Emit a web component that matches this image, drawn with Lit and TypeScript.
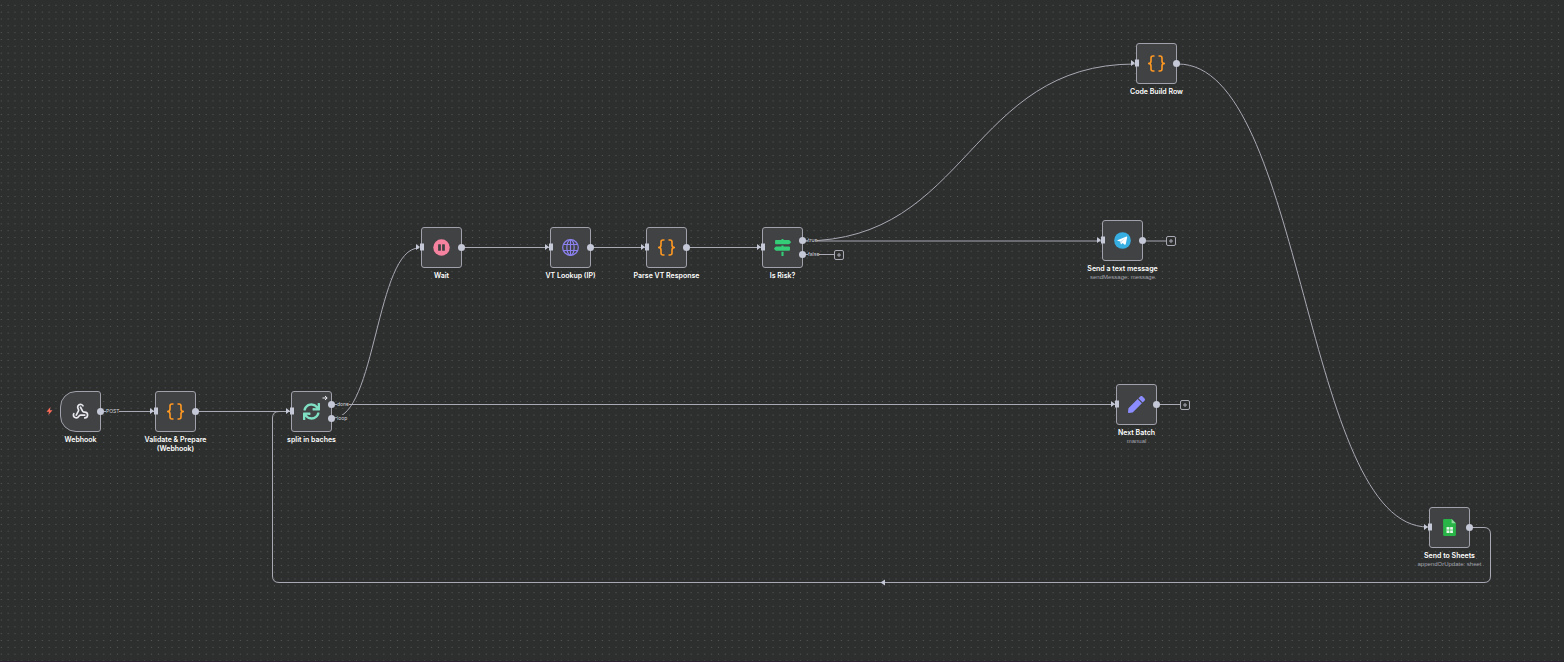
import { LitElement, html, svg, css, nothing } from "lit";
import { customElement, property } from "lit/decorators.js";
import { classMap } from "lit/directives/class-map.js";
import { styleMap } from "lit/directives/style-map.js";

interface Output {
  y: number;
  label?: string;
}

interface FlowNode {
  title: string;
  subtitle?: string;
  icon: string;
  x: number;
  y: number;
  outputs: Output[];
  trigger?: boolean;
  executeOnce?: boolean;
}

const SIZE = 41;

const nodes: FlowNode[] = [
  { title: "Webhook", icon: "webhook", x: 60, y: 391, outputs: [{ y: 20, label: "POST" }], trigger: true },
  { title: "Validate & Prepare\n(Webhook)", icon: "code", x: 155, y: 391, outputs: [{ y: 20 }] },
  {
    title: "split in baches", icon: "loop", x: 291, y: 391, executeOnce: true,
    outputs: [{ y: 13, label: "done" }, { y: 27, label: "loop" }],
  },
  { title: "Wait", icon: "pause", x: 421, y: 227, outputs: [{ y: 20 }] },
  { title: "VT Lookup (IP)", icon: "globe", x: 550, y: 227, outputs: [{ y: 20 }] },
  { title: "Parse VT Response", icon: "code", x: 646, y: 227, outputs: [{ y: 20 }] },
  {
    title: "Is Risk?", icon: "signs", x: 762, y: 227,
    outputs: [{ y: 13, label: "true" }, { y: 27, label: "false" }],
  },
  { title: "Code Build Row", icon: "code", x: 1136, y: 43, outputs: [{ y: 20 }] },
  { title: "Send a text message", subtitle: "sendMessage: message", icon: "telegram", x: 1102, y: 220, outputs: [{ y: 20 }] },
  { title: "Next Batch", subtitle: "manual", icon: "pen", x: 1116, y: 384, outputs: [{ y: 20 }] },
  { title: "Send to Sheets", subtitle: "appendOrUpdate: sheet", icon: "sheets", x: 1429, y: 507, outputs: [{ y: 20 }] },
];

const edges = [
  "M101 411.5H154",
  "M196 411.5H290",
  "M333 404.5H1115",
  "M333 418C376 418 376 248 419 248",
  "M462 247.5H549",
  "M591 247.5H645",
  "M687 247.5H761",
  "M803 241C969 241 969 64 1135 64",
  "M803 241H1101",
  "M803 254.5H834",
  "M1144 241H1167",
  "M1158 404.5H1180",
  "M1178 64C1304 64 1304 527 1428 527",
  "M1471 527.5H1484Q1490.5 527.5 1490.5 534V576Q1490.5 582.5 1484 582.5H279Q272.5 582.5 272.5 576V418Q272.5 411.5 279 411.5H290",
];

const addPoints = [
  { x: 834, y: 250, from: "Is Risk? false" },
  { x: 1166, y: 236, from: "Send a text message" },
  { x: 1180, y: 400, from: "Next Batch" },
];

const icons: Record<string, unknown> = {
  webhook: svg`<svg viewBox="0 0 24 24" fill="none" stroke="#e8e8ee" stroke-width="2.4" stroke-linecap="round" stroke-linejoin="round">
    <path d="M18 16.98h-5.99c-1.1 0-1.95.94-2.48 1.9A4 4 0 0 1 2 17c.01-.7.2-1.4.57-2"/>
    <path d="m6 17 3.13-5.78c.53-.97.1-2.18-.5-3.1a4 4 0 1 1 6.89-4.06"/>
    <path d="m12 6 3.13 5.73C15.66 12.7 16.9 13 18 13a4 4 0 0 1 0 8"/></svg>`,
  code: svg`<svg viewBox="0 0 34 34" fill="none" stroke="#ff9922" stroke-width="3.2" stroke-linejoin="round">
    <path d="M13 2H10Q6 2 6 6V12Q6 17 1 17Q6 17 6 22V28Q6 32 10 32H13"/>
    <path d="M21 2H24Q28 2 28 6V12Q28 17 33 17Q28 17 28 22V28Q28 32 24 32H21"/></svg>`,
  loop: svg`<svg viewBox="0 0 512 512" fill="#7fe0c3"><path d="M440.65 12.57l4 82.77A247.16 247.16 0 0 0 255.83 8C134.73 8 33.91 94.92 12.29 209.82A12 12 0 0 0 24.09 224h49.05a12 12 0 0 0 11.67-9.26 175.91 175.91 0 0 1 317-56.94l-101.46-4.86a12 12 0 0 0-12.57 12v47.41a12 12 0 0 0 12 12H500a12 12 0 0 0 12-12V12a12 12 0 0 0-12-12h-47.37a12 12 0 0 0-11.98 12.57zM255.83 432a175.61 175.61 0 0 1-146-77.8l101.8 4.87a12 12 0 0 0 12.57-12v-47.4a12 12 0 0 0-12-12H12a12 12 0 0 0-12 12V500a12 12 0 0 0 12 12h47.35a12 12 0 0 0 12-12.6l-4.15-82.57A247.17 247.17 0 0 0 255.83 504c121.11 0 221.93-86.92 243.55-201.82a12 12 0 0 0-11.8-14.18h-49.05a12 12 0 0 0-11.67 9.26A175.86 175.86 0 0 1 255.83 432z"/></svg>`,
  pause: svg`<svg viewBox="0 0 512 512"><circle cx="256" cy="256" r="248" fill="#f5829f"/>
    <rect x="154" y="158" width="84" height="196" rx="16" fill="#414244"/>
    <rect x="274" y="158" width="84" height="196" rx="16" fill="#414244"/></svg>`,
  globe: svg`<svg viewBox="0 0 40 40" fill="none" stroke="#8b82f0" stroke-width="2.8">
    <circle cx="20" cy="20" r="18.4"/><ellipse cx="20" cy="20" rx="8.6" ry="18.4"/>
    <path d="M20 1.4V38.6M3.2 13H36.8M3.2 27H36.8"/></svg>`,
  signs: svg`<svg viewBox="0 0 512 512" fill="#35cc78"><path d="M507.31 84.69L464 41.37c-6-6-14.14-9.37-22.63-9.37H288V16c0-8.84-7.16-16-16-16h-32c-8.84 0-16 7.16-16 16v16H56c-13.25 0-24 10.75-24 24v80c0 13.25 10.75 24 24 24h385.37c8.49 0 16.62-3.37 22.63-9.37l43.31-43.31c6.25-6.26 6.25-16.38 0-22.63zM224 496c0 8.84 7.16 16 16 16h32c8.84 0 16-7.16 16-16V384h-64v112zm232-272H288v-32h-64v32H70.63c-8.49 0-16.62 3.37-22.63 9.37L4.69 276.69c-6.25 6.25-6.25 16.38 0 22.63L48 342.63c6 6 14.14 9.37 22.63 9.37H456c13.25 0 24-10.75 24-24v-80c0-13.25-10.75-24-24-24z"/></svg>`,
  telegram: svg`<svg viewBox="0 0 40 40"><circle cx="20" cy="20" r="19.6" fill="#37aee2"/>
    <path d="M8 19.6L29.6 10.8Q31.2 10.4 31 12.4L27.6 29Q27 30.8 25.2 29.8L20 26L17.4 28.6Q16.4 29.4 16 28L14.6 22.4L8.4 20.6Q7 20.2 8 19.6Z" fill="#fff"/>
    <path d="M14.8 22.4L26.6 14.6L17.4 23.6L16.6 28.2Z" fill="#b9d9ea"/></svg>`,
  pen: svg`<svg viewBox="0 0 512 512" fill="#8a8cff"><path d="M290.74 93.24l128.02 128.02-277.99 277.99-114.14 12.6C11.35 513.54-1.56 500.62.14 485.34l12.7-114.22 277.9-277.88zm207.2-19.06l-60.11-60.11c-18.75-18.75-49.16-18.75-67.91 0l-56.55 56.55 128.02 128.02 56.55-56.55c18.75-18.76 18.75-49.16 0-67.91z"/></svg>`,
  sheets: svg`<svg viewBox="0 0 40 40"><path d="M8 0H25L35 10V37Q35 40 32 40H8Q5 40 5 37V3Q5 0 8 0Z" fill="#28b446"/>
    <path d="M25 0L35 10H25Z" fill="#8edba0"/>
    <path d="M13 19H28V33H13Z" fill="#e9f8ec"/><path d="M13 26H28M20.5 19V33" stroke="#28b446" stroke-width="1.6"/></svg>`,
};

@customElement("flow-node")
export class FlowNodeElement extends LitElement {
  @property({ attribute: false }) node!: FlowNode;

  static styles = css`
    :host { display: block; }
    .box {
      position: relative;
      box-sizing: border-box;
      display: flex;
      align-items: center;
      justify-content: center;
      height: 41px;
      border: 1px solid #a0a1ab;
      border-radius: 3px;
      background: #414244;
    }
    .trigger { border-radius: 16px 3px 3px 16px; }
    .icon { display: flex; width: 17px; height: 17px; }
    .icon svg { width: 100%; height: 100%; }
    .bolt { position: absolute; left: -15px; top: 15px; width: 7px; height: 8px; }
    .once { position: absolute; right: 3px; top: 3px; width: 6px; height: 6px; }
    .input { position: absolute; left: -6px; top: 15px; width: 8px; height: 8px; }
    .output {
      position: absolute;
      right: -4px;
      width: 7px;
      height: 7px;
      margin-top: -4px;
      border-radius: 50%;
      background: #c5c8d6;
    }
    .tag {
      position: absolute;
      left: 100%;
      margin: -4px 0 0 6px;
      background: #2d2f2e;
      color: #d4d5dd;
      font-size: 5px;
      line-height: 7px;
      white-space: nowrap;
    }
    .caption {
      display: flex;
      flex-direction: column;
      align-items: center;
      padding-top: 3px;
      text-align: center;
      white-space: pre;
    }
    .title { color: #fff; font-size: 7px; font-weight: 600; line-height: 9px; }
    .subtitle {
      color: #a2a3ad;
      font-family: "Liberation Sans", sans-serif;
      font-size: 6px;
      line-height: 9px;
    }
  `;

  render() {
    const n = this.node;
    return html`
      <div class=${classMap({ box: true, trigger: !!n.trigger })}>
        <span class="icon">${icons[n.icon]}</span>
        ${n.trigger
          ? html`<svg class="bolt" viewBox="0 0 14 16"><path d="M9 0L1 9.4H6L4.6 16L13 6.4H8Z" fill="#ff6d5a"/></svg>`
          : html`<svg class="input" viewBox="0 0 8 8"><path d="M0 1L4 4L0 7ZM4 0.5H8V7.5H4Z" fill="#c5c8d6"/></svg>`}
        ${n.executeOnce
          ? html`<svg class="once" viewBox="0 0 12 12"><path d="M1 6H10M6 2L10.4 6L6 10" fill="none" stroke="#f0f0f4" stroke-width="2"/></svg>`
          : nothing}
        ${n.outputs.map((o) => html`
          <span class="output" style=${styleMap({ top: `${o.y}px` })}></span>
          ${o.label ? html`<span class="tag" style=${styleMap({ top: `${o.y}px` })}>${o.label}</span>` : nothing}
        `)}
      </div>
      <div class="caption">
        <span class="title">${n.title}</span>
        ${n.subtitle ? html`<span class="subtitle">${n.subtitle}</span>` : nothing}
      </div>
    `;
  }
}

@customElement("app-root")
export class AppRoot extends LitElement {
  static styles = css`
    :host {
      display: block;
      font-family: Inter, "Liberation Sans", sans-serif;
    }
    .canvas {
      position: relative;
      box-sizing: border-box;
      height: 100vh;
      overflow: hidden;
      border-bottom: 1px solid #2b2430;
      background: #2d2f2e;
    }
    .layer { position: absolute; inset: 0; width: 100%; height: 100%; }
    .edge { fill: none; stroke: #a8a9b3; stroke-width: 1; }
    .node { position: absolute; }
    .add {
      position: absolute;
      box-sizing: border-box;
      display: flex;
      align-items: center;
      justify-content: center;
      width: 10px;
      height: 10px;
      padding: 0;
      border: 1px solid #a8a9b3;
      border-radius: 2px;
      background: #2d2f2e;
    }
    .add svg { width: 4px; height: 4px; }
  `;

  render() {
    return html`
      <main class="canvas">
        <svg class="layer" aria-hidden="true">
          <defs>
            <pattern id="dots" x="-2.1" y="1.9" width="6.83" height="6.83" patternUnits="userSpaceOnUse">
              <circle cx="3.41" cy="3.41" r="0.6" fill="#5c5e5f"/>
            </pattern>
          </defs>
          <rect width="100%" height="100%" fill="url(#dots)"/>
          ${edges.map((d) => svg`<path class="edge" d=${d}/>`)}
          <path d="M880.5 582.5L885 579.5V585.5Z" fill="#c5c8d6"/>
        </svg>
        ${nodes.map((n) => html`
          <flow-node
            class="node"
            .node=${n}
            style=${styleMap({ left: `${n.x}px`, top: `${n.y}px`, width: `${SIZE}px` })}
          ></flow-node>
        `)}
        ${addPoints.map((p) => html`
          <button class="add" aria-label="Add node after ${p.from}" style=${styleMap({ left: `${p.x}px`, top: `${p.y}px` })}>
            <svg viewBox="0 0 4 4"><path d="M2 0V4M0 2H4" stroke="#a8a9b3"/></svg>
          </button>
        `)}
      </main>
    `;
  }
}
